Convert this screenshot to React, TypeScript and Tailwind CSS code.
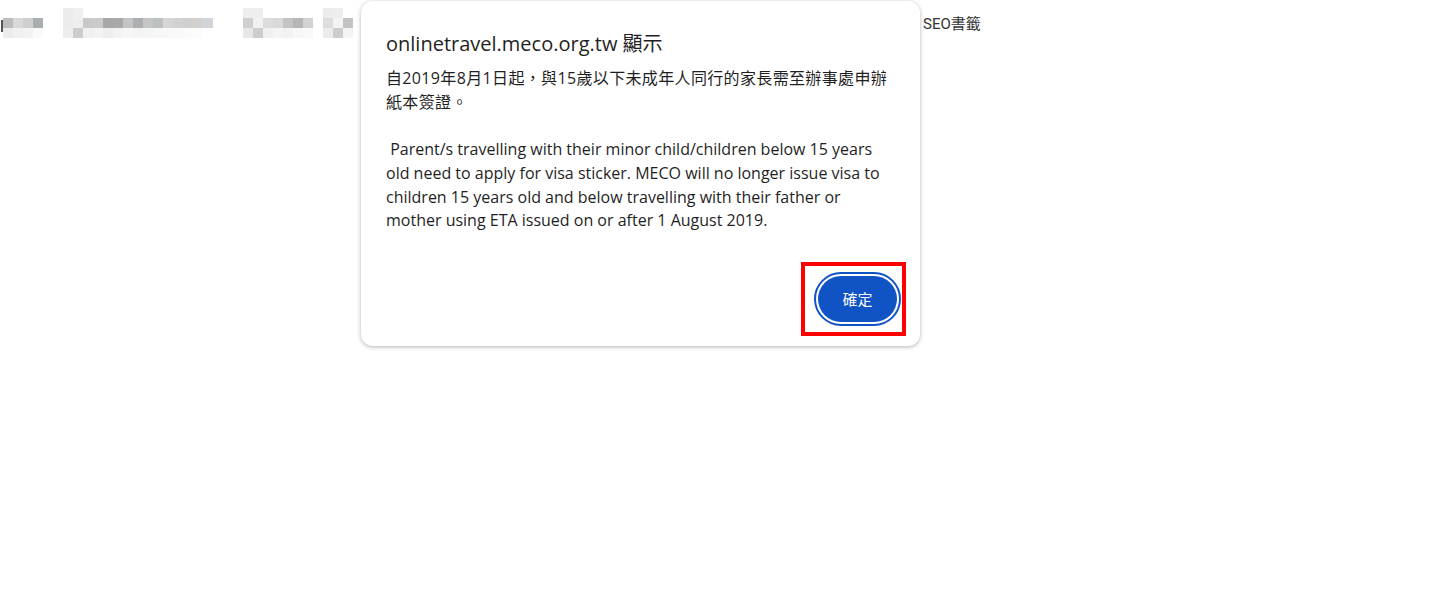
import React from "react";

// pixelated (blurred) bookmark items, each cell is 10x10
const blocks: string[][][] = [
  [
    ["#ffffff", "#ffffff", "#ffffff", "#ffffff"],
    ["#bdbdbd", "#d9d9d9", "#cfcfcf", "#a9aeb1"],
    ["#ececec", "#f1f1f1", "#f3f3f3", "#fafafa"],
  ],
  [
    ["#ececec", "#f0f0f0", "#ffffff", "#ffffff", "#ffffff", "#ffffff", "#ffffff", "#ffffff", "#ffffff", "#ffffff", "#ffffff", "#ffffff", "#ffffff", "#ffffff", "#ffffff"],
    ["#ececec", "#eeeeee", "#c9c9c9", "#cbcbcb", "#a7a7a7", "#a9a9a9", "#c4c4c4", "#acb0b2", "#c6c6c6", "#bcc2c2", "#d6d6d6", "#cfd3d5", "#cfcfcf", "#d3d0ce", "#d1d4d8"],
    ["#ededed", "#cdcdcd", "#f0f0f0", "#f3f3f3", "#eeeeee", "#f3f3f3", "#f6f6f6", "#f4f4f4", "#f5f5f5", "#f7f7f7", "#f8f8f8", "#f9f9f9", "#fbfbfb", "#fcfcfc", "#ffffff"],
  ],
  [
    ["#eeeeee", "#eeeeee", "#ffffff", "#ffffff", "#ffffff", "#ffffff", "#ffffff", "#ffffff", "#ececec", "#eeeeee", "#ffffff"],
    ["#cfcfcf", "#f1f1f1", "#dcdcdc", "#d9d9d7", "#c4c4c4", "#b6b6b6", "#d2d2d2", "#ffffff", "#dddddd", "#f3f3f3", "#c2c2c2"],
    ["#e7e7e7", "#cdcdcd", "#f0f0f0", "#f4f4f4", "#f2f2f2", "#f7f7f7", "#f9f9f9", "#ffffff", "#ebebeb", "#cdcdcd", "#f4f4f4"],
  ],
];

function Pixelated({ rows }: { rows: string[][] }) {
  return (
    <div className="flex flex-col">
      {rows.map((row, i) => (
        <div key={i} className="flex">
          {row.map((c, j) => (
            <div key={j} className="w-[10px] h-[10px]" style={{ backgroundColor: c }} />
          ))}
        </div>
      ))}
    </div>
  );
}

export default function App() {
  return (
    <div className="relative w-[1431px] h-[590px] bg-white overflow-hidden font-['Open_Sans','Noto_Sans_CJK_TC',sans-serif]">
      {/* bookmarks bar behind the dialog */}
      <div className="h-[46px] flex items-start pt-[8px]">
        <div className="w-[3px] h-[12px] mt-[12px] border-r-2 border-[#555]" />
        <Pixelated rows={blocks[0]} />
        <div className="ml-[20px]">
          <Pixelated rows={blocks[1]} />
        </div>
        <div className="ml-[30px]">
          <Pixelated rows={blocks[2]} />
        </div>
        <span className="ml-[570px] mt-[5px] text-[15px] text-[#333] font-['Roboto','Noto_Sans_CJK_TC',sans-serif]">
          SEO書籤
        </span>
      </div>

      {/* alert dialog */}
      <div className="absolute left-[361px] top-[1px] w-[559px] bg-white rounded-[12px] shadow-[0_1px_4px_rgba(0,0,0,0.3)] pt-[25px] pl-[25px] pr-[23px] pb-[24px]">
        <p className="text-[20px] leading-[36px] text-[#1f1f1f]">onlinetravel.meco.org.tw 顯示</p>
        <div className="mt-[5px] text-[16px] leading-[23.7px] text-[#1f1f1f] whitespace-pre">
          <p className="tracking-[0.35px]">自2019年8月1日起，與15歲以下未成年人同行的家長需至辦事處申辦</p>
          <p className="tracking-[0.35px]">紙本簽證。</p>
          <p> </p>
          <p> Parent/s travelling with their minor child/children below 15 years</p>
          <p>old need to apply for visa sticker. MECO will no longer issue visa to</p>
          <p>children 15 years old and below travelling with their father or</p>
          <p>mother using ETA issued on or after 1 August 2019.</p>
        </div>
        <div className="flex justify-end mt-[43px]">
          <div className="relative">
            <button className="w-[79px] h-[46px] rounded-full bg-[#0f53c4] text-white text-[15px] outline-2 outline-[#0f53c4] outline-offset-2 outline-solid">
              確定
            </button>
            {/* red annotation box */}
            <div className="absolute left-[-17px] top-[-14px] w-[105px] h-[74px] border-4 border-[#ff0000]" />
          </div>
        </div>
      </div>
    </div>
  );
}
